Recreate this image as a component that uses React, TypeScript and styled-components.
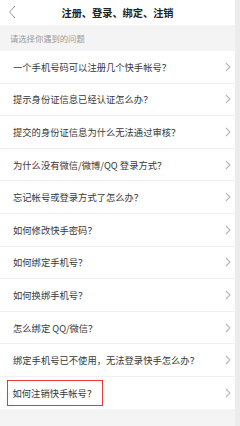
import React, { ReactElement } from 'react'
import styled, { createGlobalStyle } from 'styled-components'

const questions = [
    '一个手机号码可以注册几个快手帐号？',
    '提示身份证信息已经认证怎么办？',
    '提交的身份证信息为什么无法通过审核？',
    '为什么没有微信/微博/QQ 登录方式？',
    '忘记帐号或登录方式了怎么办？',
    '如何修改快手密码？',
    '如何绑定手机号？',
    '如何换绑手机号？',
    '怎么绑定 QQ/微信？',
    '绑定手机号已不使用，无法登录快手怎么办？',
    '如何注销快手帐号？',
]

const Chevron = ({ left }: { left?: boolean }) : ReactElement => (
    <svg width = { left ? 8 : 6 } height = { left ? 14 : 10 } viewBox = { left ? '0 0 8 14' : '0 0 6 10' } fill = 'none'>
        {
            left
                ? <path d = 'M7 1L1.5 7L7 13' stroke = '#999999' strokeWidth = '1' />
                : <path d = 'M1 1L5 5L1 9' stroke = '#b8b8b8' strokeWidth = '1.1' />
        }
    </svg>
)

const App = () : ReactElement => {
    return <Page>
        <GlobalStyle />
        <Main>
            <Header>
                <Back><Chevron left /></Back>
                <Title>注册、登录、绑定、注销</Title>
            </Header>
            <Hint>请选择你遇到的问题</Hint>
            <List>
                {
                    questions.map((q, i) => <Row key = { q }>
                        <Question $marked = { i === questions.length - 1 }>{ q }</Question>
                        <Chevron />
                    </Row>)
                }
            </List>
            <Footer />
        </Main>
        <Strip />
    </Page>
}

const GlobalStyle = createGlobalStyle`
    html, body {
        margin: 0;
        padding: 0;
        background: #f4f4f4;
    }
    body {
        font-family: "Noto Sans CJK SC", "Noto Sans", sans-serif;
    }
`

const Page = styled.div`
    display: flex;
    width: 240px;
    height: 426px;
    overflow: hidden;
`

const Main = styled.div`
    flex: 1;
    display: flex;
    flex-direction: column;
`

const Strip = styled.div`
    width: 5px;
    background: #ececec;
`

const Header = styled.header`
    position: relative;
    height: 25px;
    display: flex;
    align-items: center;
    justify-content: center;
    background: #ffffff;
`

const Back = styled.div`
    position: absolute;
    left: 8px;
    top: 5px;
    display: flex;
`

const Title = styled.h1`
    margin: 0;
    font-size: 10.2px;
    font-weight: 700;
    color: #222222;
`

const Hint = styled.div`
    height: 26px;
    display: flex;
    align-items: center;
    padding-left: 10px;
    font-size: 8.3px;
    color: #9a9a9a;
    background: #f4f4f4;
`

const List = styled.div`
    display: flex;
    flex-direction: column;
    background: #ffffff;
`

const Row = styled.div`
    height: 31.6px;
    display: flex;
    align-items: center;
    justify-content: space-between;
    padding: 0 4px 0 13px;
    border-bottom: 1px solid #f0f0f0;

    &:last-child {
        border-bottom: none;
    }
`

const Question = styled.span<{ $marked?: boolean }>`
    font-size: 9.3px;
    color: #383838;
    white-space: nowrap;
    ${({ $marked }) => $marked && `
        margin-left: -6.5px;
        padding: 5px 6px 5px 5px;
        border: 1.5px solid #e53935;
    `}
`

const Footer = styled.div`
    flex: 1;
    background: #f4f4f4;
`

export default App
